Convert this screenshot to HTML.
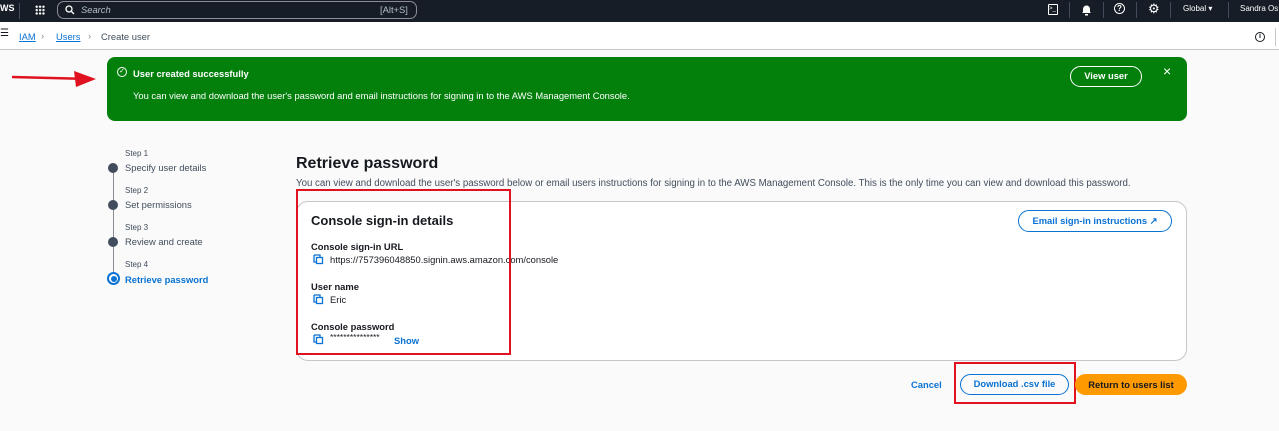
<!DOCTYPE html>
<html><head><style>
*{box-sizing:border-box;margin:0;padding:0}
body{width:1279px;height:431px;overflow:hidden;background:#fafafa;font-family:"Liberation Sans",sans-serif;color:#16191f;position:relative;font-size:9.4px}
.a{position:absolute;white-space:nowrap}
.top{left:0;top:0;width:1279px;height:22px;background:#161d26;color:#fff}
.crumb{left:0;top:22px;width:1279px;height:28px;background:#fff;border-bottom:1px solid #c6c6cd}
.blue{color:#0972d3}
.banner{left:107px;top:57px;width:1080px;height:64px;background:#037f0c;border-radius:8px;color:#fff}
.card{left:296px;top:201px;width:891px;height:160px;background:#fff;border:1px solid #c6c6cd;border-radius:12px}
.btn{border-radius:14px;font-weight:bold;text-align:center}
.red{border:2px solid #e0121f}
.dot{width:10px;height:10px;border-radius:50%;background:#414d5c}
</style></head><body>
<div class="a top">
 <div class="a" style="left:0;top:3px;font-size:9px;font-weight:bold">WS</div>
 <div class="a" style="left:19px;top:3px;width:1px;height:16px;background:#414d5c"></div>
 <div class="a" style="left:35px;top:5px;width:10px;height:10px;background:radial-gradient(circle,#fff 1px,transparent 1.3px) 0 0/3.4px 3.4px"></div>
 <div class="a" style="left:57px;top:1px;width:360px;height:18px;border:1px solid #8c8c94;border-radius:7px"></div>
 <svg class="a" style="left:65px;top:5px" width="10" height="10"><circle cx="4" cy="4" r="3" stroke="#fff" fill="none" stroke-width="1.3"/><path d="M6.5 6.5L9 9" stroke="#fff" stroke-width="1.3"/></svg>
 <div class="a" style="left:81px;top:4px;font-style:italic;color:#b6bec9">Search</div>
 <div class="a" style="left:380px;top:4px;color:#b6bec9">[Alt+S]</div>
 <div class="a" style="left:1048px;top:4px;width:10px;height:11px;border:1px solid #fff;border-radius:1px;font-size:6px;line-height:9px">&gt;_</div>
 <div class="a" style="left:1069px;top:2px;width:1px;height:16px;background:#414d5c"></div>
 <svg class="a" style="left:1081px;top:4px" width="11" height="12"><path d="M2 8V5a3.5 3.5 0 0 1 7 0v3l1 1H1z" fill="#fff"/><rect x="4" y="10" width="3" height="1.5" fill="#fff"/></svg>
 <div class="a" style="left:1103px;top:2px;width:1px;height:16px;background:#414d5c"></div>
 <div class="a" style="left:1114px;top:3px;width:11px;height:11px;border:1.3px solid #fff;border-radius:50%;font-size:8px;line-height:9px;text-align:center;font-weight:bold">?</div>
 <div class="a" style="left:1136px;top:2px;width:1px;height:16px;background:#414d5c"></div>
 <div class="a" style="left:1148px;top:1px;font-size:13px">⚙</div>
 <div class="a" style="left:1170px;top:2px;width:1px;height:16px;background:#414d5c"></div>
 <div class="a" style="left:1183px;top:4px;font-size:8px">Global ▾</div>
 <div class="a" style="left:1228px;top:2px;width:1px;height:16px;background:#414d5c"></div>
 <div class="a" style="left:1240px;top:4px;font-size:8px">Sandra Os</div>
</div>
<div class="a crumb">
 <div class="a" style="left:0;top:6px;font-size:10px">☰</div>
 <div class="a blue" style="left:19px;top:9px;text-decoration:underline">IAM</div>
 <div class="a" style="left:41px;top:8px;color:#8c8c94">›</div>
 <div class="a blue" style="left:56px;top:9px;text-decoration:underline">Users</div>
 <div class="a" style="left:88px;top:8px;color:#8c8c94">›</div>
 <div class="a" style="left:101px;top:9px;color:#414d5c">Create user</div>
 <div class="a" style="left:1255px;top:10px;width:10px;height:10px;border:1.2px solid #16191f;border-radius:50%;font-size:7px;text-align:center;line-height:8px;font-weight:bold">i</div>
 <div class="a" style="left:1275px;top:6px;width:1px;height:18px;background:#c6c6cd"></div>
</div>
<svg class="a" style="left:10px;top:68px" width="100" height="22"><path d="M2 9L80 11" stroke="#e0121f" stroke-width="2.5"/><path d="M64 3L86 11L66 19Z" fill="#e0121f"/></svg>
<div class="a banner">
 <div class="a" style="left:10px;top:10px;width:10px;height:10px;border:1.2px solid #fff;border-radius:50%;font-size:7px;text-align:center;line-height:8px">✓</div>
 <div class="a" style="left:26px;top:11px;font-weight:bold">User created successfully</div>
 <div class="a" style="left:26px;top:33px">You can view and download the user's password and email instructions for signing in to the AWS Management Console.</div>
 <div class="a btn" style="left:963px;top:9px;width:72px;height:21px;border:1.5px solid #fff;line-height:18px">View user</div>
 <div class="a" style="left:1056px;top:6px;font-size:14px">×</div>
</div>
<div class="a" style="left:125px;top:149px;font-size:8px;color:#414d5c">Step 1</div>
<div class="a" style="left:125px;top:162px;color:#414d5c">Specify user details</div>
<div class="a" style="left:113px;top:168px;width:1px;height:110px;background:#8c8c94"></div>
<div class="a dot" style="left:108px;top:163px"></div>
<div class="a" style="left:125px;top:186px;font-size:8px;color:#414d5c">Step 2</div>
<div class="a" style="left:125px;top:199px;color:#414d5c">Set permissions</div>
<div class="a dot" style="left:108px;top:200px"></div>
<div class="a" style="left:125px;top:223px;font-size:8px;color:#414d5c">Step 3</div>
<div class="a" style="left:125px;top:236px;color:#414d5c">Review and create</div>
<div class="a dot" style="left:108px;top:237px"></div>
<div class="a" style="left:125px;top:260px;font-size:8px;color:#414d5c">Step 4</div>
<div class="a blue" style="left:125px;top:274px;font-weight:bold">Retrieve password</div>
<div class="a" style="left:107px;top:272px;width:13px;height:13px;border-radius:50%;border:2px solid #0972d3;background:#fff"><div style="margin:1.5px;width:6px;height:6px;border-radius:50%;background:#0972d3"></div></div>
<div class="a" style="left:296px;top:155px;font-size:16px;font-weight:bold">Retrieve password</div>
<div class="a" style="left:296px;top:178px;color:#414d5c;font-size:9.7px">You can view and download the user's password below or email users instructions for signing in to the AWS Management Console. This is the only time you can view and download this password.</div>
<div class="a card">
 <div class="a" style="left:14px;top:11px;font-size:13px;font-weight:bold">Console sign-in details</div>
 <div class="a" style="left:14px;top:39px;font-weight:bold">Console sign-in URL</div>
 <div class="a" style="left:33px;top:52px">https://757396048850.signin.aws.amazon.com/console</div>
 <div class="a" style="left:14px;top:79px;font-weight:bold">User name</div>
 <div class="a" style="left:33px;top:92px">Eric</div>
 <div class="a" style="left:14px;top:119px;font-weight:bold">Console password</div>
 <div class="a" style="left:33px;top:130px;font-size:8.5px">***************</div>
 <div class="a blue" style="left:97px;top:133px;font-weight:bold">Show</div>
 <div class="a btn blue" style="left:721px;top:8px;width:154px;height:22px;border:1.5px solid #0972d3;line-height:19px">Email sign-in instructions &#x2197;&#xFE0E;</div>
</div>
<svg class="a" style="left:313px;top:254px" width="11" height="11"><path d="M1 1H7V3M1 1V8H3" fill="none" stroke="#0972d3" stroke-width="1.3"/><rect x="3.5" y="3.5" width="6" height="6" fill="none" stroke="#0972d3" stroke-width="1.3"/></svg>
<svg class="a" style="left:313px;top:294px" width="11" height="11"><path d="M1 1H7V3M1 1V8H3" fill="none" stroke="#0972d3" stroke-width="1.3"/><rect x="3.5" y="3.5" width="6" height="6" fill="none" stroke="#0972d3" stroke-width="1.3"/></svg>
<svg class="a" style="left:313px;top:334px" width="11" height="11"><path d="M1 1H7V3M1 1V8H3" fill="none" stroke="#0972d3" stroke-width="1.3"/><rect x="3.5" y="3.5" width="6" height="6" fill="none" stroke="#0972d3" stroke-width="1.3"/></svg>
<div class="a red" style="left:296px;top:189px;width:215px;height:166px"></div>
<div class="a blue" style="left:911px;top:379px;font-weight:bold">Cancel</div>
<div class="a btn blue" style="left:960px;top:374px;width:109px;height:21px;border:1.5px solid #0972d3;line-height:18px">Download .csv file</div>
<div class="a red" style="left:954px;top:362px;width:122px;height:42px"></div>
<div class="a btn" style="left:1075px;top:374px;width:112px;height:21px;background:#ff9900;line-height:21px">Return to users list</div>
</body></html>
